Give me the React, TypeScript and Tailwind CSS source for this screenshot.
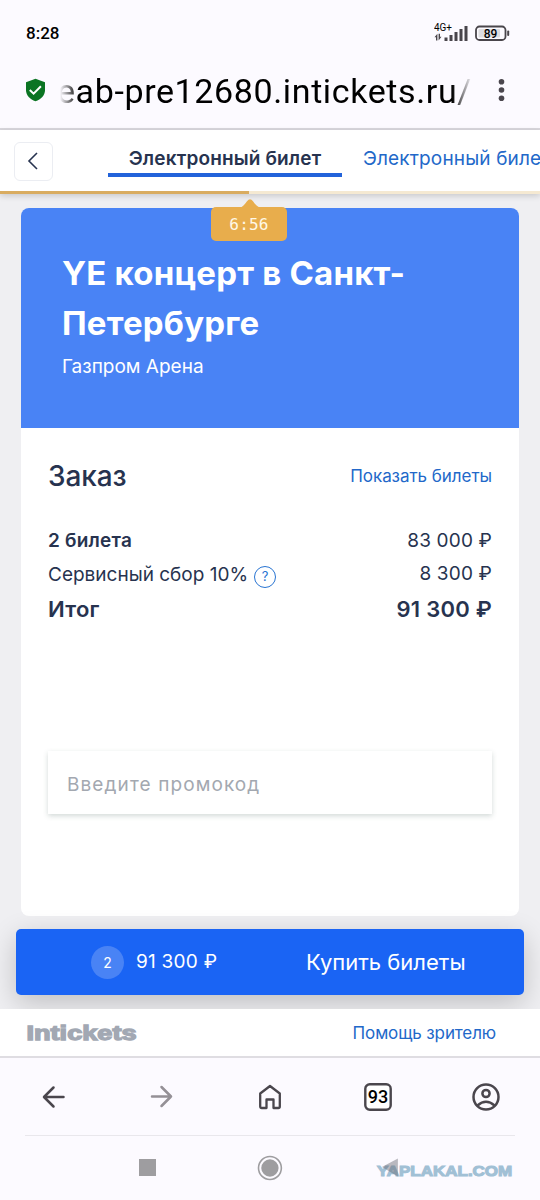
import type { ReactNode } from "react";

type OrderRow = {
  label: string;
  price: string;
  hint?: boolean;
  rowClass: string;
  priceClass: string;
};

const rows: OrderRow[] = [
  {
    label: "2 билета",
    price: "83 000 ₽",
    rowClass: "h-[33px] text-[19px] font-semibold tracking-[0.2px]",
    priceClass: "font-normal tracking-[0.15px]",
  },
  {
    label: "Сервисный сбор 10%",
    price: "8 300 ₽",
    hint: true,
    rowClass: "h-[35px] text-[19px]",
    priceClass: "relative -top-px tracking-[0.15px]",
  },
  {
    label: "Итог",
    price: "91 300 ₽",
    rowClass: "h-[33px] text-[22px] font-semibold tracking-[0.25px]",
    priceClass: "",
  },
];

function StatusBar() {
  return (
    <div className="flex h-[66px] items-center justify-between pl-[26px] pr-[29px] font-[Roboto,sans-serif] text-black">
      <span className="text-[17px] font-medium leading-5">8:28</span>
      <svg width="77" height="20" viewBox="0 0 77 20">
        <text x="0" y="8" fontSize="10" fontFamily="Roboto, sans-serif" textLength="18" lengthAdjust="spacingAndGlyphs">
          4G+
        </text>
        <g fill="#49454b">
          <path d="M.5 14.200 3.400 10.800v6.700H2v-3.300zM7.500 13.800 4.600 17.500v-6.700H6v3z" />
          <rect x="10.500" y="14.500" width="3" height="3.500" />
          <rect x="15.500" y="12" width="3" height="6" />
          <rect x="20.500" y="9" width="3" height="9" />
          <rect x="25.500" y="6" width="3" height="12" />
          <rect x="30.500" y="3" width="3" height="15" />
        </g>
        <rect x="42" y="3.500" width="29.500" height="13.500" rx="3.500" fill="none" stroke="#49454b" strokeWidth="1.800" />
        <rect x="44.500" y="6" width="21.500" height="8.500" rx="1" fill="#dedde0" />
        <rect x="73.200" y="7.500" width="2" height="5.500" rx="1" fill="#49454b" />
        <text x="56.500" y="14.500" fontSize="12" fontWeight="500" fontFamily="Roboto, sans-serif" textAnchor="middle">
          89
        </text>
      </svg>
    </div>
  );
}

function AddressBar() {
  return (
    <div className="flex h-[63px] items-start font-[Roboto,sans-serif]">
      <svg className="ml-[25px] mt-3 shrink-0" width="21" height="24" viewBox="0 0 21 24">
        <path d="M10.500.7 20 4.200v8c0 5-4 9.200-9.500 11C5 21.400 1 17.200 1 12.200v-8z" fill="#0b7423" />
        <path d="m4.800 12 3.800 3.700 7.300-7.400" fill="none" stroke="#fff" strokeWidth="2" />
      </svg>
      <div className="ml-[12px] flex w-[414px] justify-end whitespace-nowrap text-[34px] leading-[50px] tracking-[0.62px] text-black [mask-image:linear-gradient(to_right,transparent_2px,black_20px,black_394px,transparent)]">
        eab-pre12680.intickets.ru/
      </div>
      <svg className="ml-[25px] mt-3" width="10" height="24" viewBox="0 0 10 24" fill="#4a464d">
        <circle cx="4.500" cy="3.700" r="2.800" />
        <circle cx="4.500" cy="12" r="2.800" />
        <circle cx="4.500" cy="20.300" r="2.800" />
      </svg>
    </div>
  );
}

function TicketTabs() {
  return (
    <nav className="relative z-10 flex h-[64px] flex-col bg-white shadow-[0_2px_6px_rgba(0,0,0,0.16)]">
      <div className="flex flex-1 items-start overflow-hidden whitespace-nowrap">
        <button type="button" aria-label="Назад" className="ml-[14px] mt-3 flex size-[39px] shrink-0 items-center justify-center rounded-md border border-[#ebedf2] pb-px pr-[2px]">
          <svg width="12" height="20" viewBox="0 0 12 20" fill="none" stroke="#27334f" strokeWidth="1.600">
            <path d="M10 2 2 10l8 8" />
          </svg>
        </button>
        <span className="ml-[55px] flex h-[47px] w-[234px] shrink-0 items-start justify-center border-b-4 border-[#2263da] pt-[15px] text-[19px] font-semibold leading-7 tracking-[0.15px] text-[#27334f]">
          Электронный билет
        </span>
        <span className="ml-[21px] pt-[15px] text-[19px] leading-7 tracking-[0.15px] text-[#2268c9]">
          Электронный биле
        </span>
      </div>
      <div className="h-[3px] bg-[#f5e9d2]">
        <div className="h-full w-[249px] bg-[#d9ac61]" />
      </div>
      <div className="absolute left-[211px] top-[69px] flex h-[42px] w-[76px] flex-col items-center">
        <svg className="ml-[2px] shrink-0" width="22" height="9" viewBox="0 0 22 9" fill="#e8ad4c">
          <path d="M0 9C4 8 6 5 8 2.200Q11-1.800 14 2.200C16 5 18 8 22 9z" />
        </svg>
        <div className="-mt-px flex w-full flex-1 items-center justify-center rounded-[5px] bg-[#e8ad4c] pt-px font-['DejaVu_Sans_Mono',monospace] text-[16px] tracking-[0.2px] text-[#fff8e6]">
          6:56
        </div>
      </div>
    </nav>
  );
}

function OrderCard() {
  return (
    <section className="ml-[21px] mt-[14px] flex h-[708px] w-[498px] flex-col overflow-hidden rounded-lg bg-white">
      <header className="h-[220px] bg-[#4983f5] px-[41px] pt-[40px] text-white">
        <h1 className="text-[33px] font-bold leading-[50px] tracking-[0.2px]">
          YE концерт в Санкт-
          <br />
          Петербурге
        </h1>
        <p className="mt-[7px] text-[19px] leading-6">Газпром Арена</p>
      </header>
      <div className="px-[27px] text-[#27334f]">
        <div className="mt-[28px] flex h-10 items-center justify-between">
          <h2 className="text-[28px] font-medium tracking-[-0.1px]">Заказ</h2>
          <a className="relative top-px text-[17px] tracking-[-0.05px] text-[#2268c9]">Показать билеты</a>
        </div>
        <div className="mt-[29px]">
          {rows.map((row) => (
            <div key={row.label} className={`flex items-center justify-between ${row.rowClass}`}>
              <span className="flex items-center">
                {row.label}
                {row.hint && (
                  <span className="ml-[6px] mt-[2px] flex size-[22px] items-center justify-center rounded-full border border-[#2874d2] text-[13px] text-[#2874d2]">
                    ?
                  </span>
                )}
              </span>
              <span className={row.priceClass}>{row.price}</span>
            </div>
          ))}
        </div>
        <input
          placeholder="Введите промокод"
          className="mt-[125px] block h-[63px] w-full bg-white px-[19px] pt-1 text-[19px] tracking-[1.1px] shadow-[0_2px_5px_rgba(70,100,90,0.24)] placeholder:text-[#a3a8b0]"
        />
      </div>
    </section>
  );
}

function BuyBar() {
  return (
    <button type="button" className="ml-4 mt-[13px] flex h-[66px] w-[508px] items-center rounded-[5px] bg-[#1a64f4] text-white shadow-[0_8px_28px_rgba(0,0,0,0.2)]">
      <span className="ml-[75px] flex size-[33px] items-center justify-center rounded-full bg-[#4983f5] text-[14px]">2</span>
      <span className="ml-3 w-[170px] text-left text-[19px] tracking-[0.25px]">91 300 ₽</span>
      <span className="whitespace-nowrap text-[22px]">Купить билеты</span>
    </button>
  );
}

function NavItem({ children }: { children: ReactNode }) {
  return <div className="flex flex-1 items-center justify-center">{children}</div>;
}

function BrowserNav() {
  return (
    <div className="flex h-[79px] border-t-2 border-[#dfdde2] text-[#4a464d]">
      <NavItem>
        <svg width="24" height="24" viewBox="0 0 24 24" fill="none" stroke="currentColor" strokeWidth="2.500" strokeLinecap="round" strokeLinejoin="round">
          <path d="M21.500 12h-19M11.500 2.500 2 12l9.500 9.500" />
        </svg>
      </NavItem>
      <NavItem>
        <svg className="text-[#949096]" width="24" height="24" viewBox="0 0 24 24" fill="none" stroke="currentColor" strokeWidth="2.500" strokeLinecap="round" strokeLinejoin="round">
          <path d="M2 11.500h19M11.500 2l9.500 9.500-9.500 9.500" />
        </svg>
      </NavItem>
      <NavItem>
        <svg width="24" height="26" viewBox="0 0 24 26" fill="none" stroke="currentColor" strokeWidth="2.300" strokeLinejoin="round">
          <path d="M2.200 9.500 12 2l9.800 7.500v13q0 1.500-1.500 1.500h-4.800v-8.500h-7V24H3.700q-1.500 0-1.500-1.500z" />
        </svg>
      </NavItem>
      <NavItem>
        <svg width="28" height="28" viewBox="0 0 28 28">
          <rect x="1.300" y="1.300" width="25.400" height="25.400" rx="4.500" fill="#fff" stroke="currentColor" strokeWidth="2.400" />
          <text x="14" y="20.300" fontSize="18" fontWeight="500" fontFamily="Roboto, sans-serif" textAnchor="middle">
            93
          </text>
        </svg>
      </NavItem>
      <NavItem>
        <svg width="28" height="28" viewBox="0 0 28 28" fill="none" stroke="currentColor" strokeWidth="2.500">
          <circle cx="14" cy="14" r="12.500" />
          <circle cx="14" cy="10.500" r="3.600" />
          <path d="M5.500 22.500q8.500-7.500 17 0" />
        </svg>
      </NavItem>
    </div>
  );
}

function SystemNav() {
  return (
    <div className="mx-[25px] flex h-[64px] items-center border-t border-[#e9e7ec]">
      <div className="ml-[114px] size-[17px] bg-[#9e9da0]" />
      <svg className="ml-[101px]" width="26" height="26" viewBox="0 0 26 26">
        <circle cx="13" cy="13" r="11.500" fill="none" stroke="#9e9da0" strokeWidth="1.600" />
        <circle cx="13" cy="13" r="8.700" fill="#9e9da0" />
      </svg>
      <svg className="ml-[93px]" width="140" height="30" viewBox="0 0 140 30">
        <text x="1" y="22.800" fontSize="15" fontWeight="700" fontFamily="Liberation Sans, sans-serif" fill="#a1c0d5" stroke="#a1c0d5" strokeWidth="1.100" textLength="136" lengthAdjust="spacingAndGlyphs">
          YAPLAKAL.COM
        </text>
        <path d="M22 5.500v18L6 14z" fill="#686870" fillOpacity="0.450" />
      </svg>
    </div>
  );
}

export default function App() {
  return (
    <div className="flex h-[1200px] w-[540px] flex-col overflow-hidden bg-[#fcfaff] font-[Inter,sans-serif]">
      <div className="h-[130px] border-b-2 border-[#d9d7dd]">
        <StatusBar />
        <AddressBar />
      </div>
      <TicketTabs />
      <main className="h-[815px] overflow-hidden bg-[#efeff2]">
        <OrderCard />
        <BuyBar />
      </main>
      <footer className="flex h-[47px] items-center justify-between bg-white pl-[26px] pr-[44px] pt-[2px]">
        <svg width="112" height="24" viewBox="0 0 112 24">
          <text x="0.500" y="18.300" fontSize="19.500" fontWeight="700" fontFamily="Liberation Sans, sans-serif" fill="#a2a8b3" stroke="#a2a8b3" strokeWidth="1.300" textLength="110" lengthAdjust="spacingAndGlyphs">
            Intickets
          </text>
        </svg>
        <a className="text-[17px] tracking-[-0.12px] text-[#2268c9]">Помощь зрителю</a>
      </footer>
      <BrowserNav />
      <SystemNav />
    </div>
  );
}
